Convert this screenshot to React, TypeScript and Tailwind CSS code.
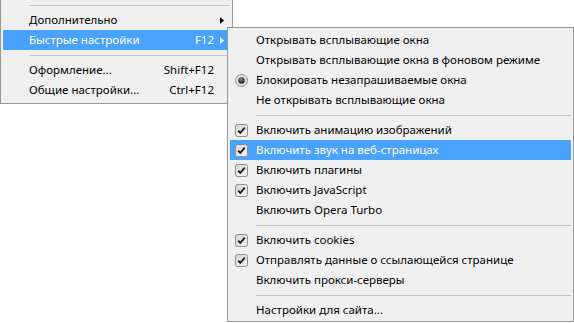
import React from "react";

type Item =
  | { kind: "sep" }
  | { kind: "item"; label: string; mark?: "check" | "radio"; active?: boolean; shortcut?: string; arrow?: boolean };

const mainItems: Item[] = [
  { kind: "sep" },
  { kind: "item", label: "Дополнительно", arrow: true },
  { kind: "item", label: "Быстрые настройки", shortcut: "F12", arrow: true, active: true },
  { kind: "sep" },
  { kind: "item", label: "Оформление...", shortcut: "Shift+F12" },
  { kind: "item", label: "Общие настройки...", shortcut: "Ctrl+F12" },
];

const subItems: Item[] = [
  { kind: "item", label: "Открывать всплывающие окна" },
  { kind: "item", label: "Открывать всплывающие окна в фоновом режиме" },
  { kind: "item", label: "Блокировать незапрашиваемые окна", mark: "radio" },
  { kind: "item", label: "Не открывать всплывающие окна" },
  { kind: "sep" },
  { kind: "item", label: "Включить анимацию изображений", mark: "check" },
  { kind: "item", label: "Включить звук на веб-страницах", mark: "check", active: true },
  { kind: "item", label: "Включить плагины", mark: "check" },
  { kind: "item", label: "Включить JavaScript", mark: "check" },
  { kind: "item", label: "Включить Opera Turbo" },
  { kind: "sep" },
  { kind: "item", label: "Включить cookies", mark: "check" },
  { kind: "item", label: "Отправлять данные о ссылающейся странице", mark: "check" },
  { kind: "item", label: "Включить прокси-серверы" },
  { kind: "sep" },
  { kind: "item", label: "Настройки для сайта..." },
];

function CheckBox() {
  return (
    <svg width="13" height="13" viewBox="0 0 13 13">
      <defs>
        <linearGradient id="cb" x1="0" y1="0" x2="1" y2="1">
          <stop offset="0" stopColor="#d4d4d4" />
          <stop offset="1" stopColor="#f4f4f4" />
        </linearGradient>
      </defs>
      <rect x="0.5" y="0.5" width="12" height="12" rx="2" fill="url(#cb)" stroke="#8e8f8f" />
      <path d="M3.2 6.6 L5.3 8.9 L9.8 3.6" fill="none" stroke="#1a1a1a" strokeWidth="1.8" />
    </svg>
  );
}

function Radio() {
  return (
    <svg width="13" height="13" viewBox="0 0 13 13">
      <defs>
        <radialGradient id="rd" cx="0.45" cy="0.35" r="0.6">
          <stop offset="0" stopColor="#8a8a8a" />
          <stop offset="1" stopColor="#1c1c1c" />
        </radialGradient>
      </defs>
      <circle cx="6.5" cy="6.5" r="6" fill="#e4e4e4" stroke="#8e8f8f" />
      <circle cx="6.5" cy="6.5" r="3.2" fill="url(#rd)" />
    </svg>
  );
}

function Arrow({ light }: { light?: boolean }) {
  return (
    <svg width="4" height="7" viewBox="0 0 4 7">
      <path d="M0 0 L4 3.5 L0 7 Z" fill={light ? "#ffffff" : "#000000"} />
    </svg>
  );
}

function Row({ item }: { item: Item }) {
  if (item.kind === "sep") {
    return (
      <div className="h-[10px] flex items-center pl-[26px]">
        <div className="h-px w-full bg-[#c5c5c5]" />
      </div>
    );
  }
  return (
    <div
      className={`relative h-[20px] flex items-center pl-[26px] ${
        item.active ? "bg-[#49a2fc] text-white" : "text-black"
      }`}
    >
      {item.mark && (
        <span className="absolute left-[5px] top-[4px] flex">
          {item.mark === "check" ? <CheckBox /> : <Radio />}
        </span>
      )}
      <span className="flex-1 whitespace-nowrap">{item.label}</span>
      {item.shortcut && <span className="whitespace-nowrap">{item.shortcut}</span>}
      <span className="w-[15px] flex justify-end pr-[5px]">{item.arrow && <Arrow light={item.active} />}</span>
    </div>
  );
}

export default function App() {
  return (
    <div
      className="relative w-[574px] h-[323px] bg-white overflow-hidden text-[11.5px] leading-none"
      style={{ fontFamily: '"Noto Sans", "DejaVu Sans", sans-serif' }}
    >
      <div className="w-[233px] bg-[#f0f0f0] border-x border-b border-[#979797] pb-[3px] pl-[2px] pr-[3px]">
        {mainItems.map((it, i) => (
          <Row key={i} item={it} />
        ))}
      </div>

      <div className="absolute left-[227px] top-[27px] w-[347px] h-[295px] bg-[#f0f0f0] border border-[#979797] pt-[2px] px-[2px]">
        {subItems.map((it, i) => (
          <Row key={i} item={it} />
        ))}
      </div>
    </div>
  );
}
